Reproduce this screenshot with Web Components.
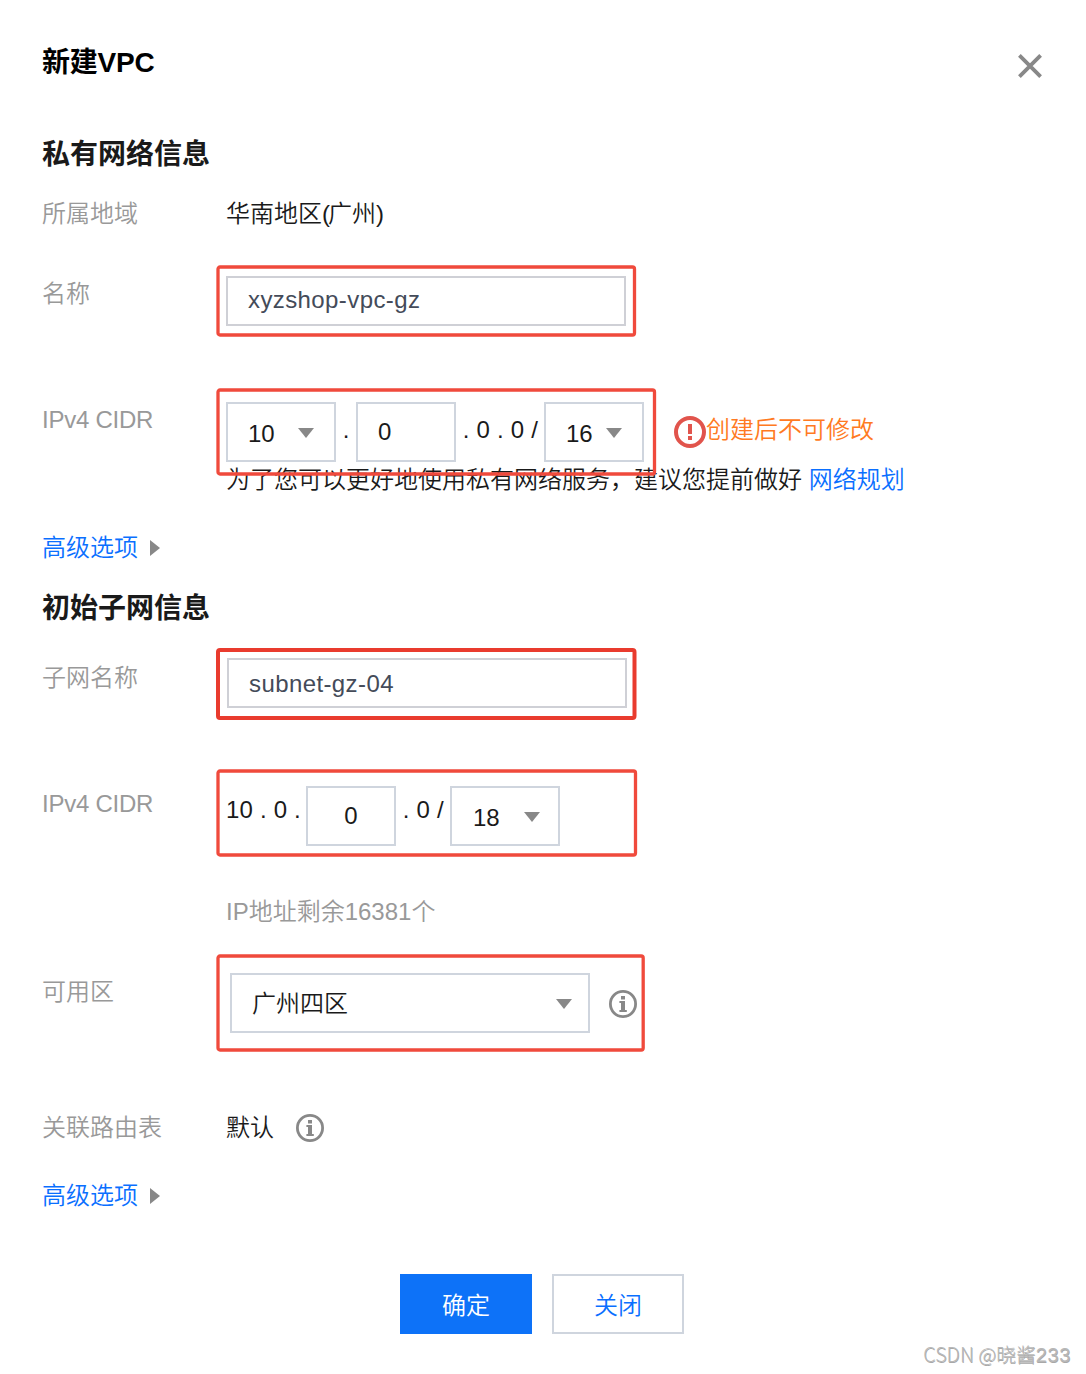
<!DOCTYPE html>
<html lang="zh-CN">
<head>
<meta charset="UTF-8">
<title>新建VPC</title>
<style>
  body {
    margin: 0;
    background: #fff;
    color: #1a1a1a;
    font: 24px/36px "Liberation Sans", "Noto Sans CJK SC", sans-serif;
  }
</style>
</head>
<body>

<vpc-dialog heading="新建VPC">
  <form-section heading="私有网络信息">
    <form-row label="所属地域" style="height: 80px">华南地区<span style="letter-spacing: -2px">(</span>广州<span style="letter-spacing: -1px">)</span></form-row>
    <form-row label="名称" style="height: 126px">
      <mark-frame style="--inset: -9px -8px -9px -8.5px">
        <text-field value="xyzshop-vpc-gz" style="width: 400px"></text-field>
      </mark-frame>
    </form-row>
    <form-row label="IPv4 CIDR" style="height: 128px; --label-spacing: -0.25px">
      <cidr-line>
        <mark-frame style="--inset: -12px -10px -12px -8.5px">
          <select-box value="10" style="width: 110px"></select-box>
          <cidr-text style="width: 20px"> . </cidr-text>
          <text-field class="tall" value="0" style="width: 100px"></text-field>
          <cidr-text style="width: 88px"> . 0 . 0 /</cidr-text>
          <select-box value="16" style="width: 100px"></select-box>
        </mark-frame>
        <warn-tip>创建后不可修改</warn-tip>
      </cidr-line>
      <help-text>为了您可以更好地使用私有网络服务，建议您提前做好 <text-link>网络规划</text-link></help-text>
    </form-row>
    <more-options></more-options>
  </form-section>

  <form-section heading="初始子网信息" style="margin-top: 25px; --head-gap: 31px">
    <form-row label="子网名称" style="height: 128px; --label-top: 2px">
      <mark-frame style="margin-left: 1px; --inset: -8px -7px -10px -9.5px; --stroke: 4; --red: #e93b2e">
        <text-field value="subnet-gz-04" style="width: 400px; line-height: 48px"></text-field>
      </mark-frame>
    </form-row>
    <form-row label="IPv4 CIDR" style="height: 187px; --label-spacing: -0.25px">
      <mark-frame style="--inset: -15px -75px -9px -8.5px; --text-line: 48px">
        <cidr-text style="width: 80px">10 . 0 . </cidr-text>
        <text-field class="tall center" value="0" style="width: 90px"></text-field>
        <cidr-text style="width: 54px"> . 0 /</cidr-text>
        <select-box value="18" style="width: 110px; --arrow-gap: 18px; --value-left: 21px"></select-box>
      </mark-frame>
      <help-text class="muted">IP地址剩余16381个</help-text>
    </form-row>
    <form-row label="可用区" style="height: 137px; --label-top: 1px">
      <mark-frame style="margin-left: 4px; --inset: -17px -6.5px -17px -11.7px">
        <select-box value="广州四区" style="width: 360px; --arrow-gap: 16px; --value-top: 2px"></select-box>
        <info-icon style="margin: 17px 0 0 19px"></info-icon>
      </mark-frame>
    </form-row>
    <form-row label="关联路由表" style="height: 68px">
      <default-route>默认</default-route>
    </form-row>
    <more-options></more-options>
  </form-section>

  <dialog-button slot="footer" primary>确定</dialog-button>
  <dialog-button slot="footer">关闭</dialog-button>
</vpc-dialog>

<page-watermark>CSDN @晓酱<span style="font: 20px 'Liberation Sans', sans-serif; letter-spacing: 0.6px">233</span></page-watermark>

<script>
// Base class: every element renders once into an open shadow root
class BaseElement extends HTMLElement {
  constructor() {
    super();
    this.attachShadow({ mode: "open" });
  }

  connectedCallback() {
    this.shadowRoot.innerHTML = this.template();
  }

  attr(name) {
    return this.getAttribute(name) || "";
  }
}

class VpcDialog extends BaseElement {
  template() {
    return `
      <style>
        :host { display: block; box-sizing: border-box; height: 1374px; padding: 45px 42px 0; }
        header { display: flex; justify-content: space-between; height: 92px; }
        h1 { margin: 0; font-size: 28px; line-height: 36px; font-weight: 700; color: #000; letter-spacing: -0.2px; }
        svg { display: block; margin: 8px 1px 0 0; width: 26px; height: 26px; }
        footer { display: flex; justify-content: center; gap: 20px; margin-top: 60px; padding-right: 2px; }
      </style>
      <header>
        <h1>${this.attr("heading")}</h1>
        <svg viewBox="0 0 26 26"><path d="M2.4 2.4 23.6 23.6M23.6 2.4 2.4 23.6" stroke="#888" stroke-width="3.8" fill="none"/></svg>
      </header>
      <slot></slot>
      <footer><slot name="footer"></slot></footer>
    `;
  }
}

class FormSection extends BaseElement {
  template() {
    return `
      <style>
        :host { display: block; }
        h2 { margin: 0 0 var(--head-gap, 23px); font-size: 28px; line-height: 36px; font-weight: 700; }
      </style>
      <h2>${this.attr("heading")}</h2>
      <slot></slot>
    `;
  }
}

class FormRow extends BaseElement {
  template() {
    return `
      <style>
        :host { display: grid; grid-template-columns: 184px 1fr; align-items: start; font-weight: 350; }
        .label { color: #999; padding-top: var(--label-top, 0); letter-spacing: var(--label-spacing, 0); }
      </style>
      <div class="label">${this.attr("label")}</div>
      <div><slot></slot></div>
    `;
  }
}

// Red highlight drawn over a group of controls
class MarkFrame extends BaseElement {
  template() {
    return `
      <style>
        :host { display: flex; width: max-content; position: relative; }
        .frame { position: absolute; inset: var(--inset); z-index: 1; pointer-events: none; }
        svg { display: block; width: 100%; height: 100%; overflow: visible; }
        rect { fill: none; stroke: var(--red, #f04a3c); stroke-width: var(--stroke, 3.3); }
      </style>
      <slot></slot>
      <div class="frame"><svg><rect width="100%" height="100%" rx="2"/></svg></div>
    `;
  }
}

class TextField extends BaseElement {
  template() {
    return `
      <style>
        :host {
          display: block; box-sizing: border-box; height: 50px; padding: 0 20px;
          border: 2px solid #cfd0d6; line-height: 44px; color: #444b59; letter-spacing: 0.4px;
        }
        :host(.tall) { height: 60px; line-height: 56px; border-color: #cfd5de; color: #1a1a1a; letter-spacing: 0; }
        :host(.center) { text-align: center; }
      </style>
      <span>${this.attr("value")}</span>
    `;
  }
}

class SelectBox extends BaseElement {
  template() {
    return `
      <style>
        :host {
          display: flex; box-sizing: border-box; height: 60px; align-items: flex-start; justify-content: space-between;
          padding: 0 var(--arrow-gap, 20px) 0 var(--value-left, 20px); border: 2px solid #cfd5de;
        }
        span { line-height: 54px; padding-top: var(--value-top, 3px); }
        svg { display: block; width: 16px; height: 10px; margin-top: 24px; }
      </style>
      <span>${this.attr("value")}</span>
      <svg viewBox="0 0 16 10"><path d="M0 0h16L8 10z" fill="#888"/></svg>
    `;
  }
}

// Address separators keep their spaces, so only the slot is preformatted
class CidrText extends BaseElement {
  template() {
    return `
      <style>
        :host { display: block; box-sizing: border-box; line-height: var(--text-line, 56px); letter-spacing: 0.2px; }
        span { white-space: pre; }
      </style>
      <span><slot></slot></span>
    `;
  }
}

class CidrLine extends BaseElement {
  template() {
    return `
      <style>:host { display: flex; gap: 30px; }</style>
      <slot></slot>
    `;
  }
}

class WarnTip extends BaseElement {
  template() {
    return `
      <style>
        :host { display: flex; color: #ff7a22; line-height: 56px; }
        svg { display: block; width: 32px; height: 32px; margin: 14px 0 0; }
      </style>
      <svg viewBox="0 0 32 32">
        <circle cx="16" cy="16" r="14" fill="none" stroke="#e1544c" stroke-width="4"/>
        <path d="M14 8h4v10h-4zM14 20h4v4h-4z" fill="#e1544c"/>
      </svg>
      <slot></slot>
    `;
  }
}

class HelpText extends BaseElement {
  template() {
    return `
      <style>
        :host { display: block; }
        :host(.muted) { color: #999; margin-top: 48px; }
      </style>
      <slot></slot>
    `;
  }
}

class TextLink extends BaseElement {
  template() {
    return `
      <style>:host { color: #0a6fff; }</style>
      <slot></slot>
    `;
  }
}

class InfoIcon extends BaseElement {
  template() {
    return `
      <style>
        :host { display: block; width: 28px; height: 28px; }
        svg { display: block; }
      </style>
      <svg width="28" height="28" viewBox="0 0 28 28">
        <circle cx="14" cy="14" r="12.6" fill="none" stroke="#888" stroke-width="2.8"/>
        <path d="M12 6h4v3.4h-4zM10.4 11H16v9h1.8v2h-7.4v-2H12v-7h-1.6z" fill="#888"/>
      </svg>
    `;
  }
}

class DefaultRoute extends BaseElement {
  template() {
    return `
      <style>:host { display: flex; align-items: center; gap: 22px; }</style>
      <slot></slot><info-icon></info-icon>
    `;
  }
}

class MoreOptions extends BaseElement {
  template() {
    return `
      <style>
        :host { display: flex; align-items: center; gap: 12px; color: #0a6fff; font-weight: 350; }
        svg { display: block; width: 10px; height: 16px; }
      </style>
      <span>高级选项</span>
      <svg viewBox="0 0 10 16"><path d="M0 0v16l10-8z" fill="#888"/></svg>
    `;
  }
}

class DialogButton extends BaseElement {
  template() {
    return `
      <style>
        :host {
          display: block; box-sizing: border-box; width: 132px; height: 60px; border: 2px solid #cfd5de;
          line-height: 60px; text-align: center; color: #0a6fff; font-weight: 350;
        }
        :host([primary]) { background: #0d72f8; border-color: #0d72f8; color: #fff; }
      </style>
      <slot></slot>
    `;
  }
}

class PageWatermark extends BaseElement {
  template() {
    return `
      <style>
        :host {
          position: absolute; right: 15px; top: 1340px; line-height: 28px; white-space: nowrap;
          font-family: "Noto Sans CJK SC", sans-serif; font-size: 19.8px; font-weight: 300;
          color: #b8b8b8; text-shadow: 0.5px 0.5px 0 #a8a8a8;
        }
      </style>
      <slot></slot>
    `;
  }
}

customElements.define("vpc-dialog", VpcDialog);
customElements.define("form-section", FormSection);
customElements.define("form-row", FormRow);
customElements.define("mark-frame", MarkFrame);
customElements.define("text-field", TextField);
customElements.define("select-box", SelectBox);
customElements.define("cidr-text", CidrText);
customElements.define("cidr-line", CidrLine);
customElements.define("warn-tip", WarnTip);
customElements.define("help-text", HelpText);
customElements.define("text-link", TextLink);
customElements.define("info-icon", InfoIcon);
customElements.define("default-route", DefaultRoute);
customElements.define("more-options", MoreOptions);
customElements.define("dialog-button", DialogButton);
customElements.define("page-watermark", PageWatermark);
</script>
</body>
</html>
